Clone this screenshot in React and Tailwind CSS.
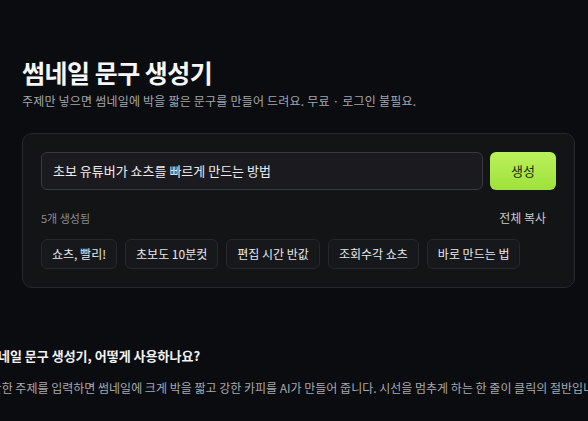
const CHIPS = ['쇼츠, 빨리!', '초보도 10분컷', '편집 시간 반값', '조회수각 쇼츠', '바로 만드는 법']

export default function App() {
  return (
    <div
      className="min-h-[421px] w-full overflow-hidden bg-[#0a0c10] text-white"
      style={{ fontFamily: '"Noto Sans CJK KR", "Noto Sans", sans-serif' }}
    >
      <div className="pl-[22px] pr-[13px] pt-[55px]">
        <h1 className="text-[25px] font-bold leading-[34px] tracking-[-0.5px] text-[#f7f7f8]">썸네일 문구 생성기</h1>
        <p className="mt-[3px] text-[12px] leading-[18px] tracking-[0.2px] text-[#a3a6ad]">
          주제만 넣으면 썸네일에 박을 짧은 문구를 만들어 드려요. 무료 · 로그인 불필요.
        </p>

        {/* generator card */}
        <div className="mt-[23px] rounded-[10px] border border-[#26282d] bg-[#131416] p-[18px]">
          <div className="flex gap-[7px]">
            <div className="flex h-[38px] flex-1 items-center rounded-[6px] border border-[#393a40] bg-[#1b1b1f] px-[11px] text-[13px] text-[#ececee]">
              초보 유튜버가 쇼츠를 빠르게 만드는 방법
            </div>
            <button className="h-[38px] w-[66px] rounded-[6px] bg-gradient-to-b from-[#b9f15a] to-[#9fe23a] text-[13px] text-[#1a2b07]">
              생성
            </button>
          </div>

          <div className="mt-[19px] flex items-center justify-between pr-[10px]">
            <span className="text-[11px] text-[#8a8c92]">5개 생성됨</span>
            <span className="text-[12px] text-[#c9cacd]">전체 복사</span>
          </div>

          <div className="mt-[12px] flex gap-[8px]">
            {CHIPS.map(c => (
              <div
                key={c}
                className="flex h-[30px] items-center rounded-[6px] border border-[#27282c] bg-[#17181b] px-[10px] text-[12px] text-[#e8e8ea]"
              >
                {c}
              </div>
            ))}
          </div>
        </div>
      </div>

      {/* how to use */}
      <div className="mt-[58px] flex justify-center">
        <div className="w-[616px] shrink-0">
          <h2 className="text-[13px] font-bold leading-[20px] text-[#f2f2f3]">썸네일 문구 생성기, 어떻게 사용하나요?</h2>
          <div className="mt-[13px] flex justify-center">
            <p className="shrink-0 whitespace-nowrap text-[12px] leading-[18px] text-[#a7a9ae]">
              간단한 주제를 입력하면 썸네일에 크게 박을 짧고 강한 카피를 AI가 만들어 줍니다. 시선을 멈추게 하는 한 줄이 클릭의 절반입니다.
            </p>
          </div>
        </div>
      </div>
    </div>
  )
}
